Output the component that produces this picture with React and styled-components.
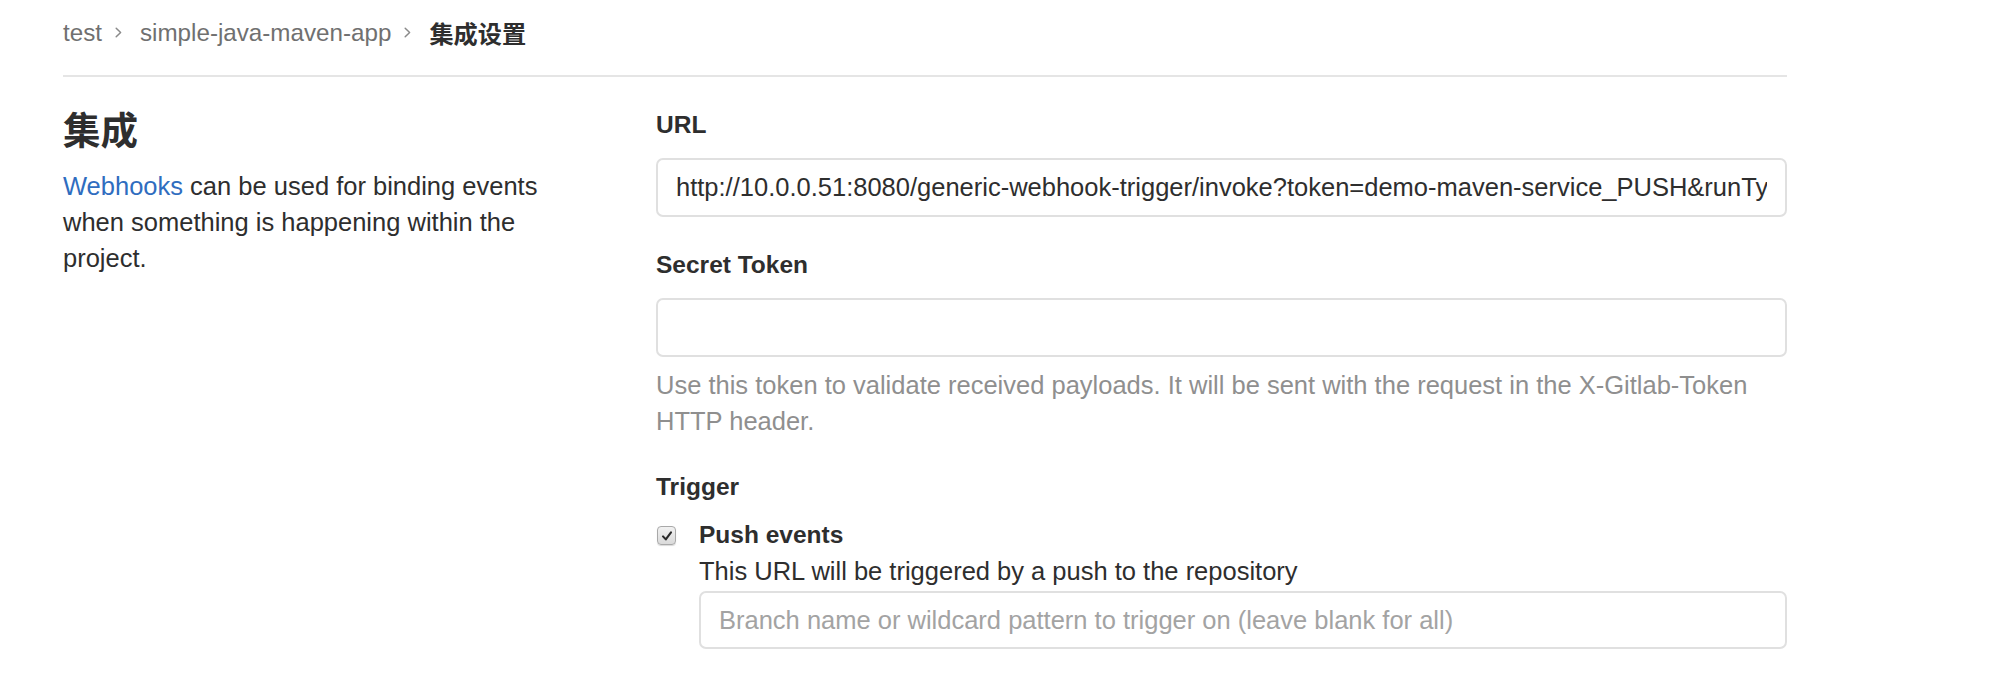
import React from "react";
import styled, { createGlobalStyle } from "styled-components";

const GlobalStyle = createGlobalStyle`
  html, body {
    margin: 0;
    padding: 0;
    background: #ffffff;
  }
  body {
    font-family: "Liberation Sans", Arial, "Noto Sans CJK SC", sans-serif;
    color: #2e2e2e;
    -webkit-font-smoothing: antialiased;
  }
  * { box-sizing: border-box; }
`;

const Page = styled.div`
  width: 1787px;
  padding-left: 63px;
`;

const Breadcrumbs = styled.nav`
  box-sizing: content-box;
  height: 65px;
  padding-bottom: 10px;
  border-bottom: 2px solid #e5e5e5;
  display: flex;
  align-items: center;
  font-size: 24.2px;
  line-height: 36px;
`;

const Crumb = styled.span`
  color: ${(p) => (p.$current ? "#2e2e2e" : "#707070")};
  font-weight: ${(p) => (p.$current ? 700 : 400)};
  font-family: ${(p) =>
    p.$current
      ? '"Noto Sans CJK SC", "Liberation Sans", sans-serif'
      : '"Liberation Sans", Arial, sans-serif'};
  font-size: 24.2px;
`;

const Sep = styled.svg`
  width: 7px;
  height: 11px;
  margin: 0 18px 0 13px;
  flex: none;
`;

const Row = styled.div`
  display: grid;
  grid-template-columns: 539px 1131px;
  column-gap: 54px;
  padding-top: 30px;
`;

const Side = styled.div`
  display: flex;
  flex-direction: column;
`;

const Title = styled.h4`
  margin: -3px 0 16px;
  font-family: "Noto Sans CJK SC", "Liberation Sans", sans-serif;
  font-size: 37.5px;
  line-height: 48px;
  font-weight: 700;
  color: #2e2e2e;
`;

const Lead = styled.p`
  margin: 0;
  max-width: 515px;
  font-size: 25.5px;
  line-height: 36px;
  color: #2e2e2e;
`;

const Link = styled.a`
  color: #2f6dbf;
  text-decoration: none;
`;

const Form = styled.div`
  display: flex;
  flex-direction: column;
`;

const Group = styled.div`
  display: flex;
  flex-direction: column;
  margin-bottom: ${(p) => p.$mb || "30px"};
`;

const Label = styled.label`
  font-size: 24.5px;
  line-height: 36px;
  font-weight: 700;
  color: #2e2e2e;
  margin-bottom: ${(p) => p.$mb || "15px"};
`;

const Input = styled.input`
  display: block;
  width: 100%;
  height: ${(p) => p.$h || "59px"};
  padding: 0 18px;
  border: 2px solid #e0e0e0;
  border-radius: 7px;
  background: #fff;
  font-family: "Liberation Sans", Arial, sans-serif;
  font-size: 25.5px;
  color: #2e2e2e;
  outline: none;
  &::placeholder {
    color: #a3a3a3;
  }
`;

const Help = styled.p`
  margin: 10px 0 0;
  font-size: 25.5px;
  line-height: 36px;
  color: #8f8f8f;
`;

const CheckRow = styled.div`
  display: grid;
  grid-template-columns: 43px 1fr;
  margin-top: 12px;
`;

const CheckBox = styled.span`
  display: flex;
  align-items: center;
  justify-content: center;
  width: 19px;
  height: 19px;
  margin: 9px 0 0 1px;
  border: 1px solid #a9a9a9;
  border-radius: 4px;
  background: linear-gradient(#f2f2f2, #dadada);
  box-shadow: 0 1px 1px rgba(0, 0, 0, 0.15);
`;

const CheckBody = styled.div`
  display: flex;
  flex-direction: column;
`;

const CheckTitle = styled.span`
  font-size: 24.5px;
  line-height: 36px;
  font-weight: 700;
  color: #2e2e2e;
`;

const CheckText = styled.span`
  font-size: 25.5px;
  line-height: 36px;
  color: #2e2e2e;
  margin-bottom: 2px;
`;

function Chevron() {
  return (
    <Sep viewBox="0 0 7 11">
      <polyline
        points="1.2,1.2 5.6,5.5 1.2,9.8"
        fill="none"
        stroke="#8a8a8a"
        strokeWidth="1.5"
        strokeLinecap="round"
        strokeLinejoin="round"
      />
    </Sep>
  );
}

export default function App() {
  return (
    <>
      <GlobalStyle />
      <Page>
        <Breadcrumbs>
          <Crumb>test</Crumb>
          <Chevron />
          <Crumb>simple-java-maven-app</Crumb>
          <Chevron />
          <Crumb $current>集成设置</Crumb>
        </Breadcrumbs>
        <Row>
          <Side>
            <Title>集成</Title>
            <Lead>
              <Link href="#">Webhooks</Link> can be used for binding events
              when something is happening within the project.
            </Lead>
          </Side>
          <Form>
            <Group>
              <Label>URL</Label>
              <Input
                defaultValue="http://10.0.0.51:8080/generic-webhook-trigger/invoke?token=demo-maven-service_PUSH&runType=push"
              />
            </Group>
            <Group $mb="30px">
              <Label>Secret Token</Label>
              <Input defaultValue="" />
              <Help>
                Use this token to validate received payloads. It will be sent
                with the request in the X-Gitlab-Token HTTP header.
              </Help>
            </Group>
            <Group $mb="0">
              <Label $mb="0">Trigger</Label>
              <CheckRow>
                <CheckBox>
                  <svg width="12" height="12" viewBox="0 0 12 12">
                    <path
                      d="M2 6.4 L4.8 9.4 L10 2.4"
                      fill="none"
                      stroke="#2a2a2a"
                      strokeWidth="2.1"
                      strokeLinecap="round"
                      strokeLinejoin="round"
                    />
                  </svg>
                </CheckBox>
                <CheckBody>
                  <CheckTitle>Push events</CheckTitle>
                  <CheckText>
                    This URL will be triggered by a push to the repository
                  </CheckText>
                  <Input
                    $h="58px"
                    placeholder="Branch name or wildcard pattern to trigger on (leave blank for all)"
                  />
                </CheckBody>
              </CheckRow>
            </Group>
          </Form>
        </Row>
      </Page>
    </>
  );
}
